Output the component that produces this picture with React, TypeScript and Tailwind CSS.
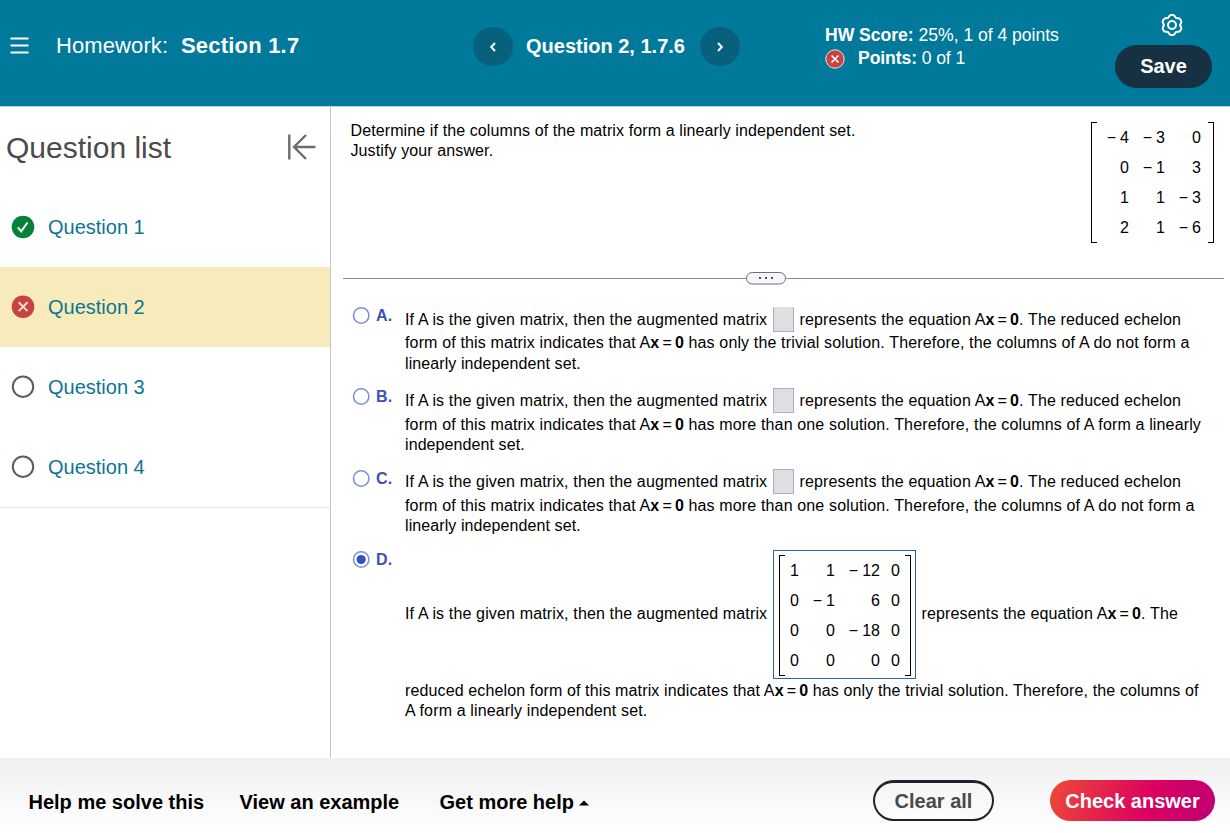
import type { ReactNode } from 'react';

const Eq = () => (
  <>
    A<b>x</b>
    <span className="px-[3px]">=</span>
    <b>0</b>
  </>
);

const gear =
  'M' +
  Array.from({ length: 72 }, (_, i) => {
    const a = (i * Math.PI) / 36;
    const r = 9.3 + 0.95 * Math.cos(6 * a) - 0.2 * Math.cos(12 * a);
    return `${(12 + r * Math.sin(a)).toFixed(2)} ${(12 - r * Math.cos(a)).toFixed(2)}`;
  }).join('L') +
  'Z';

function Circle({ kind }: { kind: 'ok' | 'bad' | 'open' }) {
  return (
    <svg width="24" height="24" viewBox="0 0 24 24" fill="none">
      {kind === 'open' && <circle cx="12" cy="11.7" r="10.2" stroke="#56606b" strokeWidth="2" fill="#fff" />}
      {kind === 'ok' && (
        <>
          <circle cx="12" cy="12" r="11.3" fill="#038238" />
          <path d="M6.8 12.4l3.4 3.9 6.3-8.8" stroke="#fff" strokeWidth="2" />
        </>
      )}
      {kind === 'bad' && (
        <>
          <circle cx="12" cy="11.7" r="11.3" fill="#c8423f" />
          <path d="M7.7 7.3l8.8 8.8M16.5 7.3l-8.8 8.8" stroke="#f8dcc8" strokeWidth="2" />
        </>
      )}
    </svg>
  );
}

function Matrix({ rows, cols, pad }: { rows: string[][]; cols: string; pad: string }) {
  return (
    <div className={`flex h-[121px] justify-between tracking-normal ${pad}`}>
      <div className="w-[6px] border-y border-l border-black" />
      <div className={`grid flex-1 grid-rows-4 items-center pt-px text-right ${cols}`}>
        {rows.flat().map((v, i) => (
          <span key={i} className="whitespace-nowrap leading-[30px]">
            {v.startsWith('-') ? <><span className="mr-[4px]">−</span>{v.slice(1)}</> : v}
          </span>
        ))}
      </div>
      <div className="w-[6px] border-y border-r border-black" />
    </div>
  );
}

function Radio({ on, letter }: { on?: boolean; letter: string }) {
  return (
    <div className="flex w-[53px] shrink-0 items-start">
      <svg className="shrink-0" width="18" height="19" viewBox="0 0 18 19">
        <circle cx="9.2" cy="9.5" r="7.7" fill="#fff" stroke="#8390d8" strokeWidth="1.6" />
        {on && <circle cx="9.2" cy="9.5" r="4.6" fill="#3350c4" />}
      </svg>
      <b className="ml-[6px] leading-[20px] tracking-[0.3px] text-[#4050b8]">{letter}.</b>
    </div>
  );
}

type ChoiceProps = { letter: string; second: ReactNode; third: string; h: string; box?: string; first?: string; rows?: string };

function Choice({ letter, second, third, h, box = 'border-[#a3afd8]', first = 'h-[27px]', rows = 'h-[20px]' }: ChoiceProps) {
  return (
    <div className={`flex ${h}`}>
      <Radio letter={letter} />
      <div className="whitespace-nowrap">
        <div className={`flex items-center ${first}`}>
          <span className="w-[368px]">If A is the given matrix, then the augmented matrix</span>
          <span className={`h-[25px] w-[21px] border bg-[#dfdfe0] ${box}`} />
          <span className="ml-[5.5px]">represents the equation <Eq />. The reduced echelon</span>
        </div>
        <div className={`leading-[20px] ${rows}`}>{second}</div>
        <div className="h-[20px] leading-[20px] tracking-[0.09px]">{third}</div>
      </div>
    </div>
  );
}

const questions: ['ok' | 'bad' | 'open', string][] = [
  ['ok', 'Question 1'],
  ['bad', 'Question 2'],
  ['open', 'Question 3'],
  ['open', 'Question 4'],
];

export default function App() {
  return (
    <div className="flex h-[833px] w-[1230px] flex-col overflow-hidden bg-white font-['Liberation_Sans',Arial,sans-serif] text-[16px] text-black">
      <header className="flex h-[106px] shrink-0 bg-[#00799b] text-white">
        <div className="flex w-[472.5px] items-start pl-[10px] pt-[32px] text-[22px] leading-[27px]">
          <svg className="mt-[5px]" width="19" height="18" viewBox="0 0 19 18">
            <path d="M.5 1.5h18M.5 8.5h18M.5 15.5h18" stroke="#fff" strokeWidth="2" />
          </svg>
          <span className="ml-[27px] w-[125px] tracking-[0.1px]">Homework:</span>
          <b className="tracking-[0.2px]">Section 1.7</b>
        </div>
        <div className="flex w-[352.5px] items-start pt-[27px]">
          <button className="flex h-[39px] w-[40px] items-center justify-center rounded-full bg-[#07617d]">
            <svg width="10" height="12" viewBox="0 0 10 12" fill="none"><path d="M7 2L3.2 6 7 10" stroke="#fff" strokeWidth="2" /></svg>
          </button>
          <b className="w-[187px] pl-[13.5px] text-[20px] leading-[38px]">Question 2, 1.7.6</b>
          <button className="flex h-[39px] w-[40px] items-center justify-center rounded-full bg-[#07617d]">
            <svg width="10" height="12" viewBox="0 0 10 12" fill="none"><path d="M3 2l3.8 4L3 10" stroke="#fff" strokeWidth="2" /></svg>
          </button>
        </div>
        <div className="w-[290px] pt-[24px] text-[17.6px] leading-[23px]">
          <div className="tracking-[-0.03px]"><b>HW Score:</b> 25%, 1 of 4 points</div>
          <div className="flex">
            <svg className="mt-[2px]" width="20" height="20" viewBox="0 0 20 20">
              <circle cx="10" cy="10" r="9.2" fill="#c8423f" stroke="#f0e6ea" strokeWidth="1" />
              <path d="M6.5 6.5l7 7M13.5 6.5l-7 7" stroke="#fff" strokeWidth="1.7" />
            </svg>
            <span className="ml-[13px] tracking-[-0.1px]"><b>Points:</b> 0 of 1</span>
          </div>
        </div>
        <div className="flex w-[97px] flex-col items-center pt-[13px]">
          <svg className="ml-[17px]" width="24" height="24" viewBox="0 0 24 24" fill="none" stroke="#fff" strokeWidth="2" strokeLinejoin="round">
            <path d={gear} />
            <circle cx="12" cy="12" r="4" />
          </svg>
          <button className="mt-[8px] h-[43px] w-[97px] rounded-full bg-[#163242] pb-[2px] text-[20px] font-bold">Save</button>
        </div>
      </header>

      <div className="flex h-[652px] shrink-0 border-t border-[#c5ced8]">
        <aside className="w-[331px] border-r border-[#c3c3cd]">
          <div className="flex h-[80px] items-center justify-between pl-[6px] pr-[14px]">
            <span className="text-[30px] text-[#4b4b4b]">Question list</span>
            <svg width="29" height="26" viewBox="0 0 29 26" fill="none" stroke="#6c6e6e" strokeWidth="2.4">
              <path d="M2.3 .5v25M28.5 13H7M19 1L7 13l12 12" />
            </svg>
          </div>
          {questions.map(([k, t]) => (
            <div key={t} className={`flex h-[80px] items-center gap-[13px] pl-[11px] text-[20px] text-[#0b768f] ${k === 'bad' ? 'bg-[#f8ebbb]' : ''}`}>
              <Circle kind={k} />
              <span>{t}</span>
            </div>
          ))}
          <div className="border-t border-[#e3e4e8]" />
        </aside>

        <main className="flex-1 pl-[12px] tracking-[0.145px]">
          <div className="flex h-[159px] justify-between pl-[7px] pr-[16px] pt-[14px]">
            <p className="w-[600px] pl-[0.5px] leading-[20px] tracking-[0.11px]">
              Determine if the columns of the matrix form a linearly independent set.
              <br />
              Justify your answer.
            </p>
            <Matrix
              pad="w-[123px] mt-[1px]"
              cols="grid-cols-[32px_36px_36px]"
              rows={[['-4', '-3', '0'], ['0', '-1', '3'], ['1', '1', '-3'], ['2', '1', '-6']]}
            />
          </div>
          <div className="flex h-[25px] items-center">
            <div className="mb-px h-px w-[403px] bg-[#858a96]" />
            <svg width="40" height="13" viewBox="0 0 40 13">
              <rect x=".5" y=".5" width="39" height="11.5" rx="5.75" fill="#f5f7fa" stroke="#6a7080" />
              <g fill="#4a4e58"><rect x="13" y="5" width="2" height="2" /><rect x="19" y="5" width="2" height="2" /><rect x="25" y="5" width="2" height="2" /></g>
            </svg>
            <div className="mb-px h-px w-[438px] bg-[#858a96]" />
          </div>

          <div className="pl-[9px] pt-[15px]">
            <Choice letter="A" h="h-[81px]" rows="h-[21px]" box="border-[#a3afd8] border-t-[#dfdfe0]" second={<>form of this matrix indicates that <Eq /> has only the trivial solution. Therefore, the columns of A do not form a</>} third="linearly independent set." />
            <Choice letter="B" h="h-[82px]" first="h-[27px] mb-px" second={<>form of this matrix indicates that <Eq /> has more than one solution. Therefore, the columns of A form a linearly</>} third="independent set." />
            <Choice letter="C" h="h-[81px]" first="-mt-px mb-px h-[27px]" second={<>form of this matrix indicates that <Eq /> has more than one solution. Therefore, the columns of A do not form a</>} third="linearly independent set." />
            <div className="flex">
              <Radio letter="D" on />
              <div className="whitespace-nowrap">
                <div className="flex h-[129px] items-center">
                  <span className="mb-[2px] w-[368px]">If A is the given matrix, then the augmented matrix</span>
                  <div className="h-[129px] w-[143px] border border-[#34609f] pl-[5px] pt-[4px]">
                    <Matrix
                      pad="w-[132px]"
                      cols="grid-cols-[14px_36px_45px_20px]"
                      rows={[['1', '1', '-12', '0'], ['0', '-1', '6', '0'], ['0', '0', '-18', '0'], ['0', '0', '0', '0']]}
                    />
                  </div>
                  <span className="mb-[2px] ml-[5.5px]">represents the equation <Eq />. The</span>
                </div>
                <div className="pt-[2px] leading-[20px] tracking-[0.13px]">reduced echelon form of this matrix indicates that <Eq /> has only the trivial solution. Therefore, the columns of</div>
                <div className="leading-[20px]">A form a linearly independent set.</div>
              </div>
            </div>
          </div>
        </main>
      </div>

      <footer className="flex h-[75px] shrink-0 items-center bg-linear-to-b from-[#f0f0f0] to-white text-[20px] font-bold">
        <span className="w-[239.5px] pl-[28.5px] pt-[12px]">Help me solve this</span>
        <span className="w-[200px] pt-[12px]">View an example</span>
        <span className="flex w-[433.5px] items-center pt-[12px]">
          Get more help
          <svg className="ml-[5px] mt-[3px]" width="10" height="6" viewBox="0 0 10 6"><path d="M5 .5l5 5H0z" /></svg>
        </span>
        <button className="mt-[10px] h-[41px] w-[121px] rounded-full border-2 border-t-[3px] border-[#1c2430] text-[#4a4a4a]">Clear all</button>
        <button className="ml-[56px] mt-[10px] h-[41px] w-[165px] rounded-full bg-linear-[110deg,#ee4b35,#db0060_60%,#bd0075] text-white">Check answer</button>
      </footer>
    </div>
  );
}
